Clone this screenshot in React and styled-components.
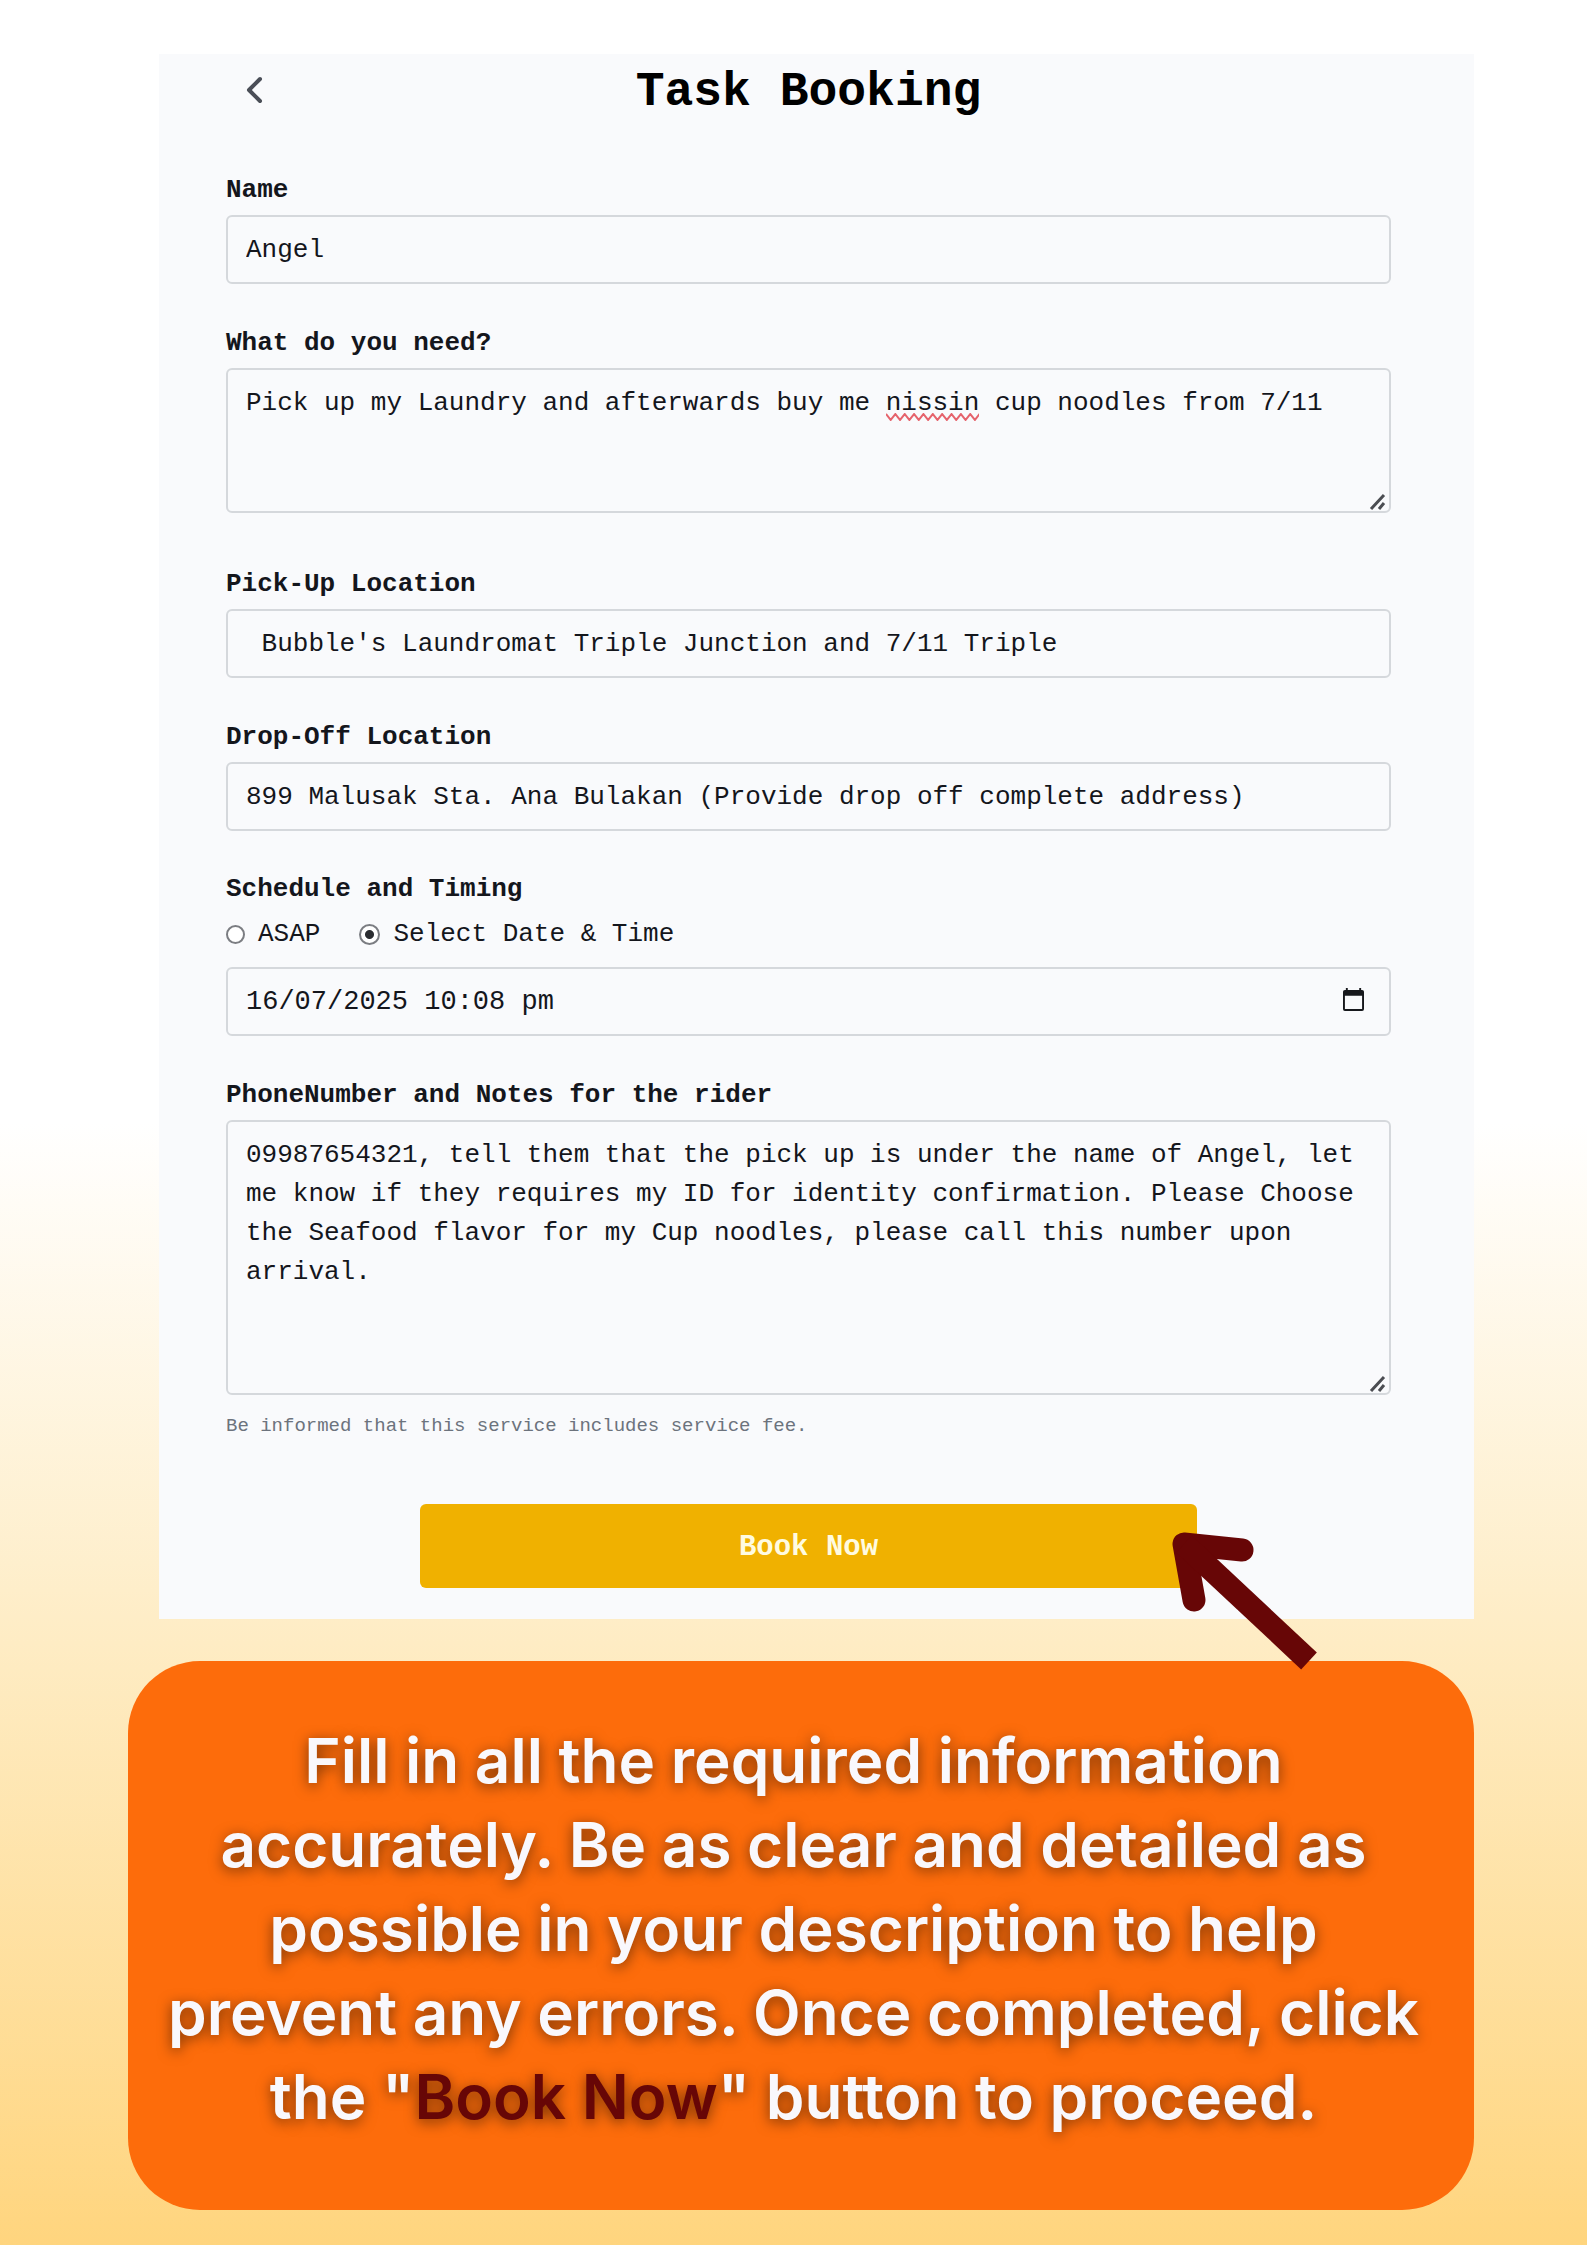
import React, { useState } from "react";
import styled, { createGlobalStyle } from "styled-components";

const mono = `"Liberation Mono", "Courier New", monospace`;

const GlobalStyle = createGlobalStyle`
  *, *::before, *::after { box-sizing: border-box; }
  body { margin: 0; }
`;

const Page = styled.main`
  min-height: 100vh;
  padding: 54px 113px 35px 128px;
  background: linear-gradient(180deg, #ffffff 50%, #feedc7 72%, #ffd57e 100%);
`;

const Panel = styled.section`
  margin-left: 31px;
  padding: 0 83px 31px 67px;
  background: #f9fafc;
  color: #14161c;
  font-family: ${mono};
`;

const Header = styled.header`
  display: grid;
  grid-template-columns: 56px 1fr 56px;
  align-items: center;
  height: 72px;
  margin-bottom: 45px;
`;

const BackButton = styled.button`
  display: flex;
  justify-content: center;
  padding: 8px 0;
  border: 0;
  background: none;
  color: #4a4e57;
  cursor: pointer;
`;

const Title = styled.h1`
  margin: 0;
  padding-top: 4px;
  color: #000;
  font-size: 48px;
  font-weight: 700;
  line-height: 64px;
  text-align: center;
`;

const Form = styled.form`
  display: flex;
  flex-direction: column;
  gap: 40px;
`;

const Field = styled.div`
  display: flex;
  flex-direction: column;
  padding-bottom: ${(p) => (p.$spaced ? "12px" : "0")};
`;

const Label = styled.label`
  margin-bottom: 6px;
  font-size: 26px;
  font-weight: 700;
  line-height: 38px;
`;

const Group = styled.fieldset`
  display: flex;
  flex-direction: column;
  min-width: 0;
  margin: 0;
  padding: 0;
  border: 0;
`;

const Legend = styled.legend`
  margin-bottom: 8px;
  padding: 0;
  font-size: 26px;
  font-weight: 700;
  line-height: 36px;
`;

const TextInput = styled.input`
  width: 100%;
  height: 69px;
  padding: 0 18px;
  border: 2px solid #d5d8dc;
  border-radius: 6px;
  background: transparent;
  color: inherit;
  font: 26px ${mono};
  outline: none;
`;

const AreaBox = styled.div`
  position: relative;
  display: flex;
  font: 26px ${mono};
`;

const TextArea = styled.textarea`
  width: 100%;
  height: ${(p) => p.$height};
  padding: 14px 18px;
  border: 2px solid #d5d8dc;
  border-radius: 6px;
  background: transparent;
  color: inherit;
  font: 26px/39px ${mono};
  outline: none;
  overflow: hidden;
  resize: none;
`;

const Grip = styled.svg`
  position: absolute;
  right: 4px;
  bottom: 2px;
  pointer-events: none;
`;

const SpellMark = styled.svg`
  position: absolute;
  top: 45px;
  left: calc(20px + ${(p) => p.$start}ch);
  width: ${(p) => p.$length}ch;
  height: 8px;
  pointer-events: none;
`;

const RadioRow = styled.div`
  display: flex;
  gap: 39px;
  margin-bottom: 14px;
`;

const RadioLabel = styled.label`
  display: flex;
  align-items: center;
  gap: 13px;
  font-size: 26px;
  line-height: 38px;
`;

const Radio = styled.input`
  appearance: none;
  width: 19px;
  height: 19px;
  margin: 0;
  border: 2px solid #7b7d82;
  border-radius: 50%;
  background: #fff;

  &:checked {
    width: 21px;
    height: 21px;
    background: radial-gradient(circle, #2b2d31 4px, #fff 5px);
  }
`;

const DateBox = styled.div`
  display: flex;
  align-items: center;
  height: 69px;
  padding: 0 25px 0 18px;
  border: 2px solid #d5d8dc;
  border-radius: 6px;
`;

const DateInput = styled.input`
  flex: 1;
  min-width: 0;
  padding: 0;
  border: 0;
  background: transparent;
  color: inherit;
  font: 27px ${mono};
  outline: none;
`;

const CalendarButton = styled.button`
  display: flex;
  padding: 0 0 4px;
  border: 0;
  background: none;
  color: #16181c;
  cursor: pointer;
`;

const Hint = styled.p`
  margin: 16px 0 0;
  color: #6c737d;
  font-size: 19px;
  line-height: 30px;
`;

const Actions = styled.div`
  position: relative;
  width: 66.7%;
  margin: 23px auto 0;
`;

const SubmitButton = styled.button`
  display: block;
  width: 100%;
  height: 84px;
  padding: 2px 0 0;
  border: 0;
  border-radius: 6px;
  background: #f0b100;
  color: #fffbe0;
  font: 700 29px ${mono};
  cursor: pointer;
`;

const Pointer = styled.svg`
  position: absolute;
  top: -4px;
  left: calc(100% - 67px);
  z-index: 1;
  pointer-events: none;
`;

const Callout = styled.aside`
  margin-top: 42px;
  padding: 58px 44px 71px 29px;
  border-radius: 72px;
  background: #fd6c0b;
`;

const CalloutText = styled.p`
  margin: 0;
  color: #f9f8fc;
  font: 600 62px/84px Inter, sans-serif;
  text-align: center;
  text-shadow: 0 3px 14px rgba(0, 0, 0, 0.55);
`;

const Emphasis = styled.strong`
  color: #670606;
  font-weight: 600;
`;

function ResizeGrip() {
  return (
    <Grip width="18" height="18" viewBox="0 0 18 18" fill="none" stroke="#4b4d52" strokeWidth="3" aria-hidden="true">
      <path d="M2 16 15 2M10 16 15 10" />
    </Grip>
  );
}

function Squiggle({ start, length }) {
  const points = Array.from({ length: 21 }, (_, i) => `${i * 5},${i % 2 ? 7 : 1}`).join(" ");
  return (
    <SpellMark $start={start} $length={length} viewBox="0 0 100 8" preserveAspectRatio="none" aria-hidden="true">
      <polyline points={points} fill="none" stroke="#e5636c" strokeWidth="2" />
    </SpellMark>
  );
}

export default function App() {
  const [timing, setTiming] = useState("date");
  const request = "Pick up my Laundry and afterwards buy me nissin cup noodles from 7/11";

  return (
    <>
      <GlobalStyle />
      <Page>
        <Panel>
          <Header>
            <BackButton type="button" aria-label="Back">
              <svg width="20" height="30" viewBox="0 0 20 30" fill="none" stroke="currentColor" strokeWidth="4" strokeLinecap="round" strokeLinejoin="round">
                <path d="M16 4 5 15l11 11" />
              </svg>
            </BackButton>
            <Title>Task Booking</Title>
          </Header>

          <Form onSubmit={(e) => e.preventDefault()}>
            <Field>
              <Label htmlFor="name">Name</Label>
              <TextInput id="name" defaultValue="Angel" />
            </Field>

            <Field $spaced>
              <Label htmlFor="request">What do you need?</Label>
              <AreaBox>
                <TextArea id="request" $height="145px" spellCheck={false} defaultValue={request} />
                <Squiggle start={request.indexOf("nissin")} length={6} />
                <ResizeGrip />
              </AreaBox>
            </Field>

            <Field>
              <Label htmlFor="pickup">Pick-Up Location</Label>
              <TextInput id="pickup" defaultValue=" Bubble's Laundromat Triple Junction and 7/11 Triple" />
            </Field>

            <Field>
              <Label htmlFor="dropoff">Drop-Off Location</Label>
              <TextInput id="dropoff" defaultValue="899 Malusak Sta. Ana Bulakan (Provide drop off complete address)" />
            </Field>

            <Group>
              <Legend>Schedule and Timing</Legend>
              <RadioRow>
                <RadioLabel>
                  <Radio type="radio" name="timing" checked={timing === "asap"} onChange={() => setTiming("asap")} />
                  ASAP
                </RadioLabel>
                <RadioLabel>
                  <Radio type="radio" name="timing" checked={timing === "date"} onChange={() => setTiming("date")} />
                  Select Date &amp; Time
                </RadioLabel>
              </RadioRow>
              <DateBox>
                <DateInput aria-label="Date and time" defaultValue="16/07/2025 10:08 pm" />
                <CalendarButton type="button" aria-label="Open calendar">
                  <svg width="21" height="23" viewBox="0 0 22 24" aria-hidden="true">
                    <path fill="currentColor" d="M3 0h2v2h12V0h2v2h1a2 2 0 0 1 2 2v18a2 2 0 0 1-2 2H2a2 2 0 0 1-2-2V4a2 2 0 0 1 2-2h1zM2 8v14h18V8z" />
                  </svg>
                </CalendarButton>
              </DateBox>
            </Group>

            <Field>
              <Label htmlFor="notes">PhoneNumber and Notes for the rider</Label>
              <AreaBox>
                <TextArea
                  id="notes"
                  $height="275px"
                  spellCheck={false}
                  defaultValue="09987654321, tell them that the pick up is under the name of Angel, let me know if they requires my ID for identity confirmation. Please Choose the Seafood flavor for my Cup noodles, please call this number upon arrival."
                />
                <ResizeGrip />
              </AreaBox>
              <Hint>Be informed that this service includes service fee.</Hint>
            </Field>

            <Actions>
              <SubmitButton type="submit">Book Now</SubmitButton>
              <Pointer width="220" height="190" viewBox="0 0 220 190" fill="none" stroke="#670606" strokeWidth="23" strokeLinejoin="round" aria-hidden="true">
                <path strokeLinecap="round" d="M112 50 54 44 64 100" />
                <path d="M54 44 179 161" />
              </Pointer>
            </Actions>
          </Form>
        </Panel>

        <Callout>
          <CalloutText>
            Fill in all the required information accurately. Be as clear and detailed as possible in your description
            to help prevent any errors. Once completed, click the "<Emphasis>Book Now</Emphasis>" button to proceed.
          </CalloutText>
        </Callout>
      </Page>
    </>
  );
}
